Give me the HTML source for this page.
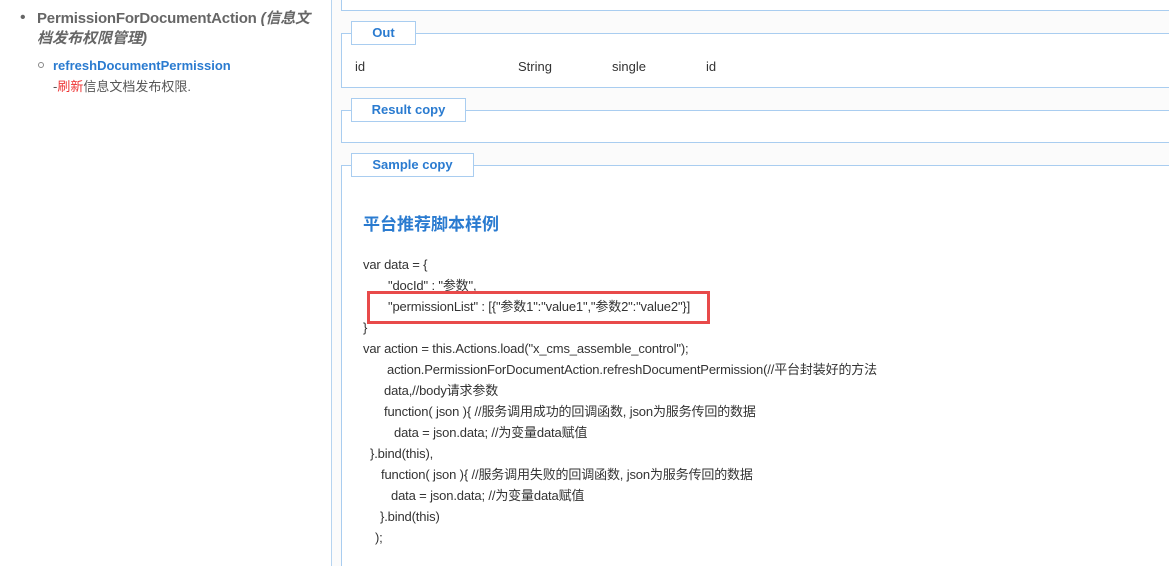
<!DOCTYPE html>
<html style="overflow:hidden"><head><meta charset="utf-8"><style>
*{margin:0;padding:0;box-sizing:border-box}
html,body{width:1169px;height:566px;overflow:hidden}
body{background:#fff;font-family:"Liberation Sans","Noto Sans CJK SC",sans-serif;font-size:13px;color:#333;position:relative}
.a{position:absolute;white-space:nowrap}
#left{position:absolute;left:0;top:0;width:332px;height:566px;background:#fff;border-right:1px solid #b6d4f0}
#right{position:absolute;left:332px;top:0;width:837px;height:566px;background:#fbfbfb}
.fs{position:absolute;left:341px;width:840px;border:1px solid #a9cdf0;background:#fff}
.lg{position:absolute;left:351px;height:24px;border:1px solid #a9cdf0;background:#fff;color:#2a7bd0;font-weight:bold;font-size:13px;line-height:22px;text-align:center}
.c{position:absolute;white-space:nowrap;line-height:16px;letter-spacing:-0.15px}
</style></head><body>
<div id="left">
<div class="a" style="left:20px;top:9px;font-size:16px;color:#666">•</div>
<div class="a" style="left:37px;top:9px;font-size:15px;font-weight:bold;color:#666;line-height:20px;letter-spacing:-0.2px">PermissionForDocumentAction <i>(信息文</i></div>
<div class="a" style="left:37px;top:29px;font-size:15px;font-weight:bold;color:#666;line-height:20px"><i>档发布权限管理)</i></div>
<div class="a" style="left:38px;top:62px;width:6px;height:6px;border:1px solid #888;border-radius:50%"></div>
<div class="a" style="left:53px;top:58px;font-size:13px;font-weight:bold;color:#2a7bd0">refreshDocumentPermission</div>
<div class="a" style="left:53px;top:76px;font-size:13px;color:#555">-<span style="color:#e33">刷新</span>信息文档发布权限.</div>
</div>
<div id="right"></div>
<div class="fs" style="top:-20px;height:31px"></div>
<div class="fs" style="top:33px;height:55px"></div>
<div class="lg" style="top:21px;width:65px">Out</div>
<div class="a" style="left:355px;top:59px">id</div>
<div class="a" style="left:518px;top:59px">String</div>
<div class="a" style="left:612px;top:59px">single</div>
<div class="a" style="left:706px;top:59px">id</div>
<div class="fs" style="top:110px;height:33px"></div>
<div class="lg" style="top:98px;width:115px">Result copy</div>
<div class="fs" style="top:165px;height:420px"></div>
<div class="lg" style="top:153px;width:123px">Sample copy</div>
<div class="a" style="left:363px;top:210px;font-size:17px;font-weight:bold;color:#2a7bd0">平台推荐脚本样例</div>
<div class="c" style="left:363px;top:257px">var data = {</div>
<div class="c" style="left:388px;top:278px">"docId" : "参数",</div>
<div class="c" style="left:388px;top:299px">"permissionList" : [{"参数1":"value1","参数2":"value2"}]</div>
<div class="a" style="left:367px;top:291px;width:343px;height:33px;border:3px solid #e84a4a"></div>
<div class="c" style="left:363px;top:320px">}</div>
<div class="c" style="left:363px;top:341px">var action = this.Actions.load("x_cms_assemble_control");</div>
<div class="c" style="left:387px;top:362px">action.PermissionForDocumentAction.refreshDocumentPermission(//平台封装好的方法</div>
<div class="c" style="left:384px;top:383px">data,//body请求参数</div>
<div class="c" style="left:384px;top:404px">function( json ){ //服务调用成功的回调函数, json为服务传回的数据</div>
<div class="c" style="left:394px;top:425px">data = json.data; //为变量data赋值</div>
<div class="c" style="left:370px;top:446px">}.bind(this),</div>
<div class="c" style="left:381px;top:467px">function( json ){ //服务调用失败的回调函数, json为服务传回的数据</div>
<div class="c" style="left:391px;top:488px">data = json.data; //为变量data赋值</div>
<div class="c" style="left:380px;top:509px">}.bind(this)</div>
<div class="c" style="left:375px;top:530px">);</div>
</body></html>
